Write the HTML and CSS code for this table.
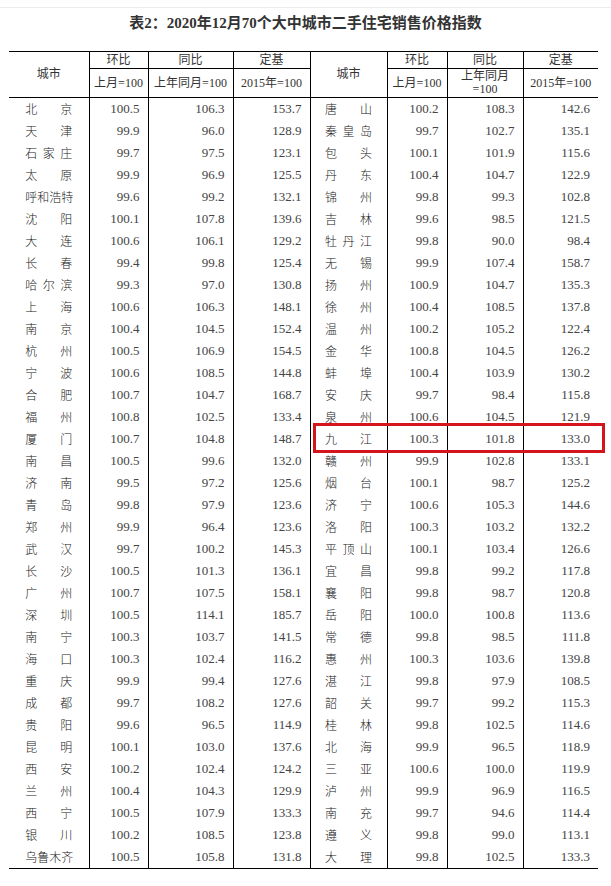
FILE: index.html
```html
<!DOCTYPE html>
<html lang="zh-CN">
<head>
<meta charset="utf-8">
<title>表2</title>
<link rel="stylesheet" href="styles.css">
</head>
<body>
<div class="topline"></div>
<h1 class="title">表2：2020年12月70个大中城市二手住宅销售价格指数</h1>
<div class="wrap">
<table class="grid">
<colgroup>
<col class="c-city1"><col class="c-hb1"><col class="c-tb1"><col class="c-dj1">
<col class="c-city2"><col class="c-hb2"><col class="c-tb2"><col class="c-dj2">
</colgroup>
<thead>
<tr class="h1">
<th rowspan="2" class="sep">城市</th><th class="sep">环比</th><th class="sep">同比</th><th class="sep">定基</th>
<th rowspan="2" class="sep">城市</th><th class="sep">环比</th><th class="sep">同比</th><th>定基</th>
</tr>
<tr class="h2">
<th class="sep">上月=100</th><th class="sep">上年同月=100</th><th class="sep">2015年=100</th>
<th class="sep">上月=100</th><th class="sep narrow">上年同月<br>=100</th><th>2015年=100</th>
</tr>
</thead>
<tbody>
<tr><td class="city"><span>北京</span></td><td>100.5</td><td>106.3</td><td>153.7</td><td class="city"><span>唐山</span></td><td>100.2</td><td>108.3</td><td class="last">142.6</td></tr>
<tr><td class="city"><span>天津</span></td><td>99.9</td><td>96.0</td><td>128.9</td><td class="city"><span>秦皇岛</span></td><td>99.7</td><td>102.7</td><td class="last">135.1</td></tr>
<tr><td class="city"><span>石家庄</span></td><td>99.7</td><td>97.5</td><td>123.1</td><td class="city"><span>包头</span></td><td>100.1</td><td>101.9</td><td class="last">115.6</td></tr>
<tr><td class="city"><span>太原</span></td><td>99.9</td><td>96.9</td><td>125.5</td><td class="city"><span>丹东</span></td><td>100.4</td><td>104.7</td><td class="last">122.9</td></tr>
<tr><td class="city"><span>呼和浩特</span></td><td>99.6</td><td>99.2</td><td>132.1</td><td class="city"><span>锦州</span></td><td>99.8</td><td>99.3</td><td class="last">102.8</td></tr>
<tr><td class="city"><span>沈阳</span></td><td>100.1</td><td>107.8</td><td>139.6</td><td class="city"><span>吉林</span></td><td>99.6</td><td>98.5</td><td class="last">121.5</td></tr>
<tr><td class="city"><span>大连</span></td><td>100.6</td><td>106.1</td><td>129.2</td><td class="city"><span>牡丹江</span></td><td>99.8</td><td>90.0</td><td class="last">98.4</td></tr>
<tr><td class="city"><span>长春</span></td><td>99.4</td><td>99.8</td><td>125.4</td><td class="city"><span>无锡</span></td><td>99.9</td><td>107.4</td><td class="last">158.7</td></tr>
<tr><td class="city"><span>哈尔滨</span></td><td>99.3</td><td>97.0</td><td>130.8</td><td class="city"><span>扬州</span></td><td>100.9</td><td>104.7</td><td class="last">135.3</td></tr>
<tr><td class="city"><span>上海</span></td><td>100.6</td><td>106.3</td><td>148.1</td><td class="city"><span>徐州</span></td><td>100.4</td><td>108.5</td><td class="last">137.8</td></tr>
<tr><td class="city"><span>南京</span></td><td>100.4</td><td>104.5</td><td>152.4</td><td class="city"><span>温州</span></td><td>100.2</td><td>105.2</td><td class="last">122.4</td></tr>
<tr><td class="city"><span>杭州</span></td><td>100.5</td><td>106.9</td><td>154.5</td><td class="city"><span>金华</span></td><td>100.8</td><td>104.5</td><td class="last">126.2</td></tr>
<tr><td class="city"><span>宁波</span></td><td>100.6</td><td>108.5</td><td>144.8</td><td class="city"><span>蚌埠</span></td><td>100.4</td><td>103.9</td><td class="last">130.2</td></tr>
<tr><td class="city"><span>合肥</span></td><td>100.7</td><td>104.7</td><td>168.7</td><td class="city"><span>安庆</span></td><td>99.7</td><td>98.4</td><td class="last">115.8</td></tr>
<tr><td class="city"><span>福州</span></td><td>100.8</td><td>102.5</td><td>133.4</td><td class="city"><span>泉州</span></td><td>100.6</td><td>104.5</td><td class="last">121.9</td></tr>
<tr><td class="city"><span>厦门</span></td><td>100.7</td><td>104.8</td><td>148.7</td><td class="city"><span>九江</span></td><td>100.3</td><td>101.8</td><td class="last">133.0</td></tr>
<tr><td class="city"><span>南昌</span></td><td>100.5</td><td>99.6</td><td>132.0</td><td class="city"><span>赣州</span></td><td>99.9</td><td>102.8</td><td class="last">133.1</td></tr>
<tr><td class="city"><span>济南</span></td><td>99.5</td><td>97.2</td><td>125.6</td><td class="city"><span>烟台</span></td><td>100.1</td><td>98.7</td><td class="last">125.2</td></tr>
<tr><td class="city"><span>青岛</span></td><td>99.8</td><td>97.9</td><td>123.6</td><td class="city"><span>济宁</span></td><td>100.6</td><td>105.3</td><td class="last">144.6</td></tr>
<tr><td class="city"><span>郑州</span></td><td>99.9</td><td>96.4</td><td>123.6</td><td class="city"><span>洛阳</span></td><td>100.3</td><td>103.2</td><td class="last">132.2</td></tr>
<tr><td class="city"><span>武汉</span></td><td>99.7</td><td>100.2</td><td>145.3</td><td class="city"><span>平顶山</span></td><td>100.1</td><td>103.4</td><td class="last">126.6</td></tr>
<tr><td class="city"><span>长沙</span></td><td>100.5</td><td>101.3</td><td>136.1</td><td class="city"><span>宜昌</span></td><td>99.8</td><td>99.2</td><td class="last">117.8</td></tr>
<tr><td class="city"><span>广州</span></td><td>100.7</td><td>107.5</td><td>158.1</td><td class="city"><span>襄阳</span></td><td>99.8</td><td>98.7</td><td class="last">120.8</td></tr>
<tr><td class="city"><span>深圳</span></td><td>100.5</td><td>114.1</td><td>185.7</td><td class="city"><span>岳阳</span></td><td>100.0</td><td>100.8</td><td class="last">113.6</td></tr>
<tr><td class="city"><span>南宁</span></td><td>100.3</td><td>103.7</td><td>141.5</td><td class="city"><span>常德</span></td><td>99.8</td><td>98.5</td><td class="last">111.8</td></tr>
<tr><td class="city"><span>海口</span></td><td>100.3</td><td>102.4</td><td>116.2</td><td class="city"><span>惠州</span></td><td>100.3</td><td>103.6</td><td class="last">139.8</td></tr>
<tr><td class="city"><span>重庆</span></td><td>99.9</td><td>99.4</td><td>127.6</td><td class="city"><span>湛江</span></td><td>99.8</td><td>97.9</td><td class="last">108.5</td></tr>
<tr><td class="city"><span>成都</span></td><td>99.7</td><td>108.2</td><td>127.6</td><td class="city"><span>韶关</span></td><td>99.7</td><td>99.2</td><td class="last">115.3</td></tr>
<tr><td class="city"><span>贵阳</span></td><td>99.6</td><td>96.5</td><td>114.9</td><td class="city"><span>桂林</span></td><td>99.8</td><td>102.5</td><td class="last">114.6</td></tr>
<tr><td class="city"><span>昆明</span></td><td>100.1</td><td>103.0</td><td>137.6</td><td class="city"><span>北海</span></td><td>99.9</td><td>96.5</td><td class="last">118.9</td></tr>
<tr><td class="city"><span>西安</span></td><td>100.2</td><td>102.4</td><td>124.2</td><td class="city"><span>三亚</span></td><td>100.6</td><td>100.0</td><td class="last">119.9</td></tr>
<tr><td class="city"><span>兰州</span></td><td>100.4</td><td>104.3</td><td>129.9</td><td class="city"><span>泸州</span></td><td>99.9</td><td>96.9</td><td class="last">116.5</td></tr>
<tr><td class="city"><span>西宁</span></td><td>100.5</td><td>107.9</td><td>133.3</td><td class="city"><span>南充</span></td><td>99.7</td><td>94.6</td><td class="last">114.4</td></tr>
<tr><td class="city"><span>银川</span></td><td>100.2</td><td>108.5</td><td>123.8</td><td class="city"><span>遵义</span></td><td>99.8</td><td>99.0</td><td class="last">113.1</td></tr>
<tr><td class="city"><span>乌鲁木齐</span></td><td>100.5</td><td>105.8</td><td>131.8</td><td class="city"><span>大理</span></td><td>99.8</td><td>102.5</td><td class="last">133.3</td></tr>
</tbody>
</table>
<div class="highlight"></div>
</div>
</body>
</html>
```
FILE: styles.css
```css
html, body {
  margin: 0;
  padding: 0;
  background: #fff;
}
body {
  font-family: "Liberation Serif", "Noto Sans CJK SC", serif;
  color: #333;
}
.topline {
  height: 7px;
  border-bottom: 1px solid #ececec;
}
.title {
  margin: 5px 0 0 0;
  height: 38px;
  font-size: 15px;
  line-height: 20px;
  font-weight: bold;
  text-align: center;
  color: #333;
}
.wrap {
  position: relative;
  margin-left: 9px;
  width: 589px;
}
.grid {
  border-collapse: collapse;
  table-layout: fixed;
  width: 589px;
  border-top: 1px solid #000;
  border-bottom: 1px solid #000;
}
.c-city1 { width: 80px; }
.c-hb1 { width: 59px; }
.c-tb1 { width: 85px; }
.c-dj1 { width: 77px; }
.c-city2 { width: 77px; }
.c-hb2 { width: 60px; }
.c-tb2 { width: 76px; }
.c-dj2 { width: 75px; }

.grid th {
  font-weight: normal;
  font-size: 12px;
  line-height: 13px;
  padding: 0;
  text-align: center;
  color: #333;
  border-bottom: 1px solid #000;
}
.grid .h1 th { height: 16px; }
.grid .h2 th { height: 28px; }
.grid th.sep,
.grid td {
  border-right: 1px solid #000;
}
.grid td.last { border-right: none; }
.grid td {
  height: 22px;
  padding: 0 8px 0 0;
  font-size: 13px;
  line-height: 22px;
  text-align: right;
  color: #444;
  white-space: nowrap;
}
.grid td.city {
  text-align: center;
  padding: 0;
  color: #222;
}
.grid td.city span {
  display: inline-block;
  width: 47px;
  font-family: "Noto Sans CJK SC", sans-serif;
  font-size: 12px;
  font-weight: 300;
  line-height: 22px;
  text-align: justify;
  text-align-last: justify;
  vertical-align: top;
}
.highlight {
  position: absolute;
  left: 304px;
  top: 372px;
  width: 292px;
  height: 30px;
  box-sizing: border-box;
  border: 3px solid #d4161c;
}
```
